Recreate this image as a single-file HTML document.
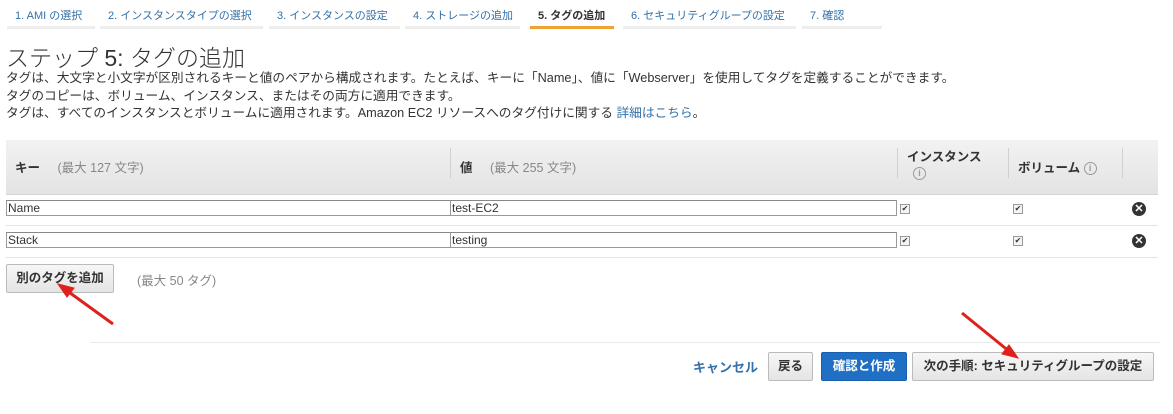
<!DOCTYPE html>
<html><head><meta charset="utf-8"><style>
body{margin:0;width:1173px;height:414px;background:#fff;font-family:"Liberation Sans","Noto Sans CJK JP",sans-serif;position:relative;overflow:hidden;color:#333}
.a{position:absolute}
.tab{position:absolute;top:0;border-bottom:3px solid #eee;font-size:11px;color:#3371a8;line-height:32px;padding-left:8px;box-sizing:border-box;height:29px}
.tab.on{border-bottom-color:#f0a133;color:#333;font-weight:bold}
.p{font-size:12.7px;color:#333;left:6px}
.inp{position:absolute;height:16px;border:1px solid #999;border-top-color:#888;box-sizing:border-box;font-size:12px;line-height:14px;padding-left:1px;background:#fff}
.cb{position:absolute;width:8px;height:8px;border:1px solid #999;background:#f4f4f4;font-size:8px;line-height:8px;text-align:center;color:#333}
.x{position:absolute;width:14px;height:14px;border-radius:50%;background:#333;color:#fff;font-size:11px;line-height:14px;text-align:center;font-weight:bold}
.btn{position:absolute;border:1px solid #bbb;border-radius:2px;background:linear-gradient(#f7f7f7,#e4e4e4);font-size:12.5px;text-align:center;box-sizing:border-box;color:#333}
.info{display:inline-block;width:11px;height:11px;border:1px solid #999;border-radius:50%;font-size:9px;line-height:11px;text-align:center;color:#999;vertical-align:middle}
</style></head><body>
<div class="tab" style="left:7px;width:88px">1. AMI の選択</div>
<div class="tab" style="left:100px;width:163px">2. インスタンスタイプの選択</div>
<div class="tab" style="left:269px;width:131px">3. インスタンスの設定</div>
<div class="tab" style="left:405px;width:115px">4. ストレージの追加</div>
<div class="tab on" style="left:530px;width:84px">5. タグの追加</div>
<div class="tab" style="left:623px;width:173px">6. セキュリティグループの設定</div>
<div class="tab" style="left:802px;width:80px">7. 確認</div>
<div class="a" style="left:6px;top:39px;font-size:23px;color:#333;font-weight:300">ステップ 5: タグの追加</div>
<div class="a p" style="top:67px">タグは、大文字と小文字が区別されるキーと値のペアから構成されます。たとえば、キーに「Name」、値に「Webserver」を使用してタグを定義することができます。</div>
<div class="a p" style="top:85px">タグのコピーは、ボリューム、インスタンス、またはその両方に適用できます。</div>
<div class="a p" style="top:102px">タグは、すべてのインスタンスとボリュームに適用されます。Amazon EC2 リソースへのタグ付けに関する <span style="color:#3371a8">詳細はこちら</span>。</div>
<div class="a" style="left:6px;top:140px;width:1152px;height:54px;background:linear-gradient(#f2f2f2,#e3e3e3);border-bottom:1px solid #d5d5d5"></div>
<div class="a" style="left:15px;top:157px;font-size:12.5px;font-weight:bold">キー <span style="font-weight:normal;color:#888;margin-left:14px">(最大 127 文字)</span></div>
<div class="a" style="left:450px;top:148px;width:1px;height:30px;background:#d0d0d0"></div>
<div class="a" style="left:460px;top:157px;font-size:12.5px;font-weight:bold">値 <span style="font-weight:normal;color:#888;margin-left:14px">(最大 255 文字)</span></div>
<div class="a" style="left:897px;top:148px;width:1px;height:30px;background:#d0d0d0"></div>
<div class="a" style="left:907px;top:149px;font-size:12.5px;font-weight:bold;line-height:16px">インスタンス<br><span class="info" style="margin-left:6px">i</span></div>
<div class="a" style="left:1008px;top:148px;width:1px;height:30px;background:#d0d0d0"></div>
<div class="a" style="left:1018px;top:157px;font-size:12.5px;font-weight:bold">ボリューム <span class="info">i</span></div>
<div class="a" style="left:1122px;top:148px;width:1px;height:30px;background:#d0d0d0"></div>
<div class="inp" style="left:6px;top:200px;width:445px">Name</div>
<div class="inp" style="left:450px;top:200px;width:447px">test-EC2</div>
<div class="cb" style="left:900px;top:204px">✔</div>
<div class="cb" style="left:1013px;top:204px">✔</div>
<div class="x" style="left:1132px;top:202px">✕</div>
<div class="a" style="left:6px;top:225px;width:1152px;height:1px;background:#e3e3e3"></div>
<div class="inp" style="left:6px;top:232px;width:445px">Stack</div>
<div class="inp" style="left:450px;top:232px;width:447px">testing</div>
<div class="cb" style="left:900px;top:236px">✔</div>
<div class="cb" style="left:1013px;top:236px">✔</div>
<div class="x" style="left:1132px;top:234px">✕</div>
<div class="a" style="left:6px;top:257px;width:1152px;height:1px;background:#e3e3e3"></div>
<div class="btn" style="left:6px;top:264px;width:108px;height:29px;line-height:27px;font-weight:bold">別のタグを追加</div>
<div class="a" style="left:137px;top:270px;font-size:12.5px;color:#888">(最大 50 タグ)</div>
<div class="a" style="left:90px;top:342px;width:1070px;height:1px;background:#eaeaea"></div>
<div class="a" style="left:693px;top:357px;font-size:13px;color:#3371a8;font-weight:bold">キャンセル</div>
<div class="btn" style="left:768px;top:352px;width:45px;height:29px;line-height:27px;font-weight:bold">戻る</div>
<div class="btn" style="left:821px;top:352px;width:86px;height:29px;line-height:27px;font-weight:bold;background:#1f6fc5;border-color:#1860ad;color:#fff">確認と作成</div>
<div class="btn" style="left:912px;top:352px;width:242px;height:29px;line-height:27px;font-weight:bold">次の手順: セキュリティグループの設定</div>
<svg class="a" style="left:0;top:0" width="1173" height="414">
<g stroke="#e0201c" stroke-width="3" fill="#e0201c">
<line x1="113" y1="324" x2="66" y2="290"/>
<polygon points="58,284 74,288 67,297" stroke-width="1"/>
<line x1="962" y1="313" x2="1010" y2="352"/>
<polygon points="1018,358 1002,354 1009,345" stroke-width="1"/>
</g></svg>
</body></html>
